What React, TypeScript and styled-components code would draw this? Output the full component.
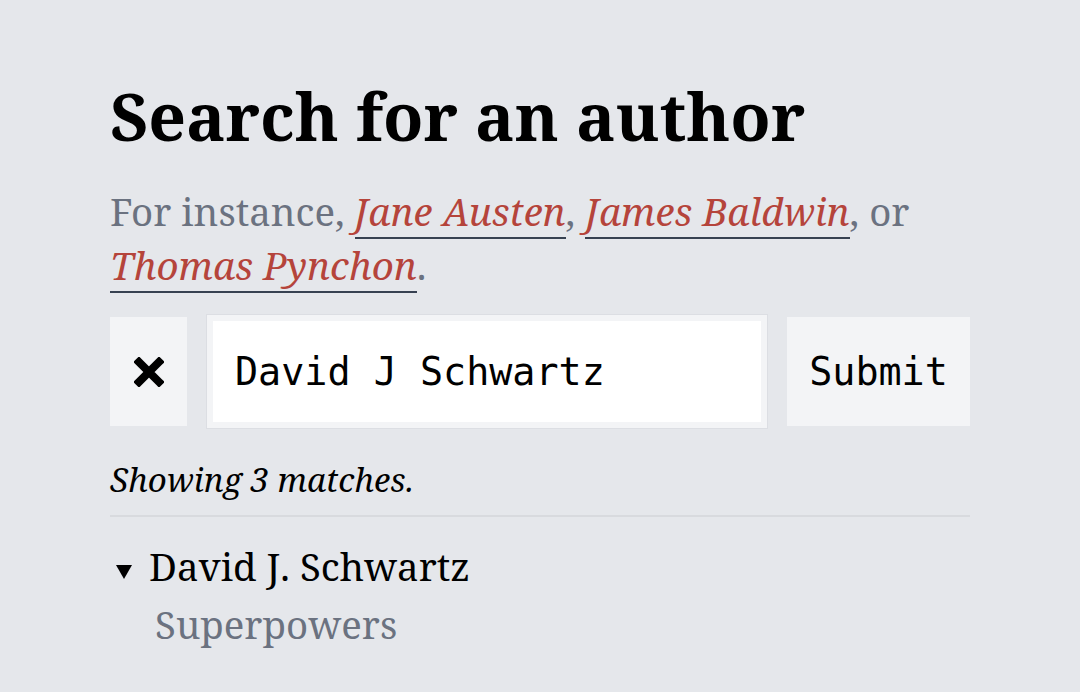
import React from 'react';
import styled, { createGlobalStyle } from 'styled-components';

const GlobalStyle = createGlobalStyle`
  body {
    margin: 0;
    background: #e5e7eb;
    font-family: "Noto Serif", "DejaVu Serif", serif;
    color: #000;
  }
`;

const Page = styled.main`
  width: 860px;
  padding: 76px 0 0 110px;
`;

const Title = styled.h1`
  margin: 0;
  font-size: 66px;
  line-height: 1.2;
  font-weight: 700;
`;

const Intro = styled.p`
  margin: 29px 0 0;
  font-size: 38.4px;
  line-height: 54px;
  color: #6b7280;
`;

const AuthorLink = styled.a`
  color: #b5443b;
  font-style: italic;
  text-decoration: none;
  border-bottom: 2px solid #374151;
`;

const SearchRow = styled.form`
  display: flex;
  align-items: center;
  gap: 20px;
  margin-top: 23px;
`;

const PlainButton = styled.button<{ $wide?: boolean }>`
  height: 109px;
  width: ${(p) => (p.$wide ? '183px' : '77px')};
  display: flex;
  align-items: center;
  justify-content: center;
  padding: 0;
  border: none;
  background: #f3f4f6;
  font-family: "DejaVu Sans Mono", monospace;
  font-size: 38.4px;
  color: #000;
`;

const QueryInput = styled.input`
  flex: 1;
  box-sizing: border-box;
  height: 113px;
  min-width: 0;
  padding: 0 22px;
  border: 6px solid #f3f4f6;
  outline: 1px solid #dcdee3;
  background: #fff;
  font-family: "DejaVu Sans Mono", monospace;
  font-size: 38.4px;
  color: #000;
`;

const Count = styled.p`
  margin: 29px 0 0;
  font-size: 33px;
  line-height: 46px;
  font-style: italic;
  padding-bottom: 12px;
  border-bottom: 2px solid #d8dade;
`;

const Entry = styled.div`
  margin-top: 22px;
`;

const EntryHead = styled.div`
  display: flex;
  align-items: center;
  font-size: 38.4px;
  line-height: 54px;
`;

const Caret = styled.span`
  width: 0;
  height: 0;
  margin: 12px 17px 0 6px;
  border-left: 8px solid transparent;
  border-right: 8px solid transparent;
  border-top: 14px solid #000;
`;

const Work = styled.div`
  margin-left: 45px;
  font-size: 38.4px;
  line-height: 62px;
  color: #6b7280;
`;

function CloseIcon() {
  return (
    <svg width="30" height="30" viewBox="0 0 30 30">
      <path d="M5 5 L25 25 M25 5 L5 25" stroke="#000" strokeWidth="8" strokeLinecap="square" />
    </svg>
  );
}

export default function App() {
  return (
    <>
      <GlobalStyle />
      <Page>
        <Title>Search for an author</Title>
        <Intro>
          For instance, <AuthorLink href="#">Jane Austen</AuthorLink>,{' '}
          <AuthorLink href="#">James Baldwin</AuthorLink>, or{' '}
          <AuthorLink href="#">Thomas Pynchon</AuthorLink>.
        </Intro>
        <SearchRow onSubmit={(e) => e.preventDefault()}>
          <PlainButton type="button" aria-label="Clear">
            <CloseIcon />
          </PlainButton>
          <QueryInput defaultValue="David J Schwartz" />
          <PlainButton type="submit" $wide>
            Submit
          </PlainButton>
        </SearchRow>
        <Count>Showing 3 matches.</Count>
        <Entry>
          <EntryHead>
            <Caret />
            David J. Schwartz
          </EntryHead>
          <Work>Superpowers</Work>
        </Entry>
      </Page>
    </>
  );
}
